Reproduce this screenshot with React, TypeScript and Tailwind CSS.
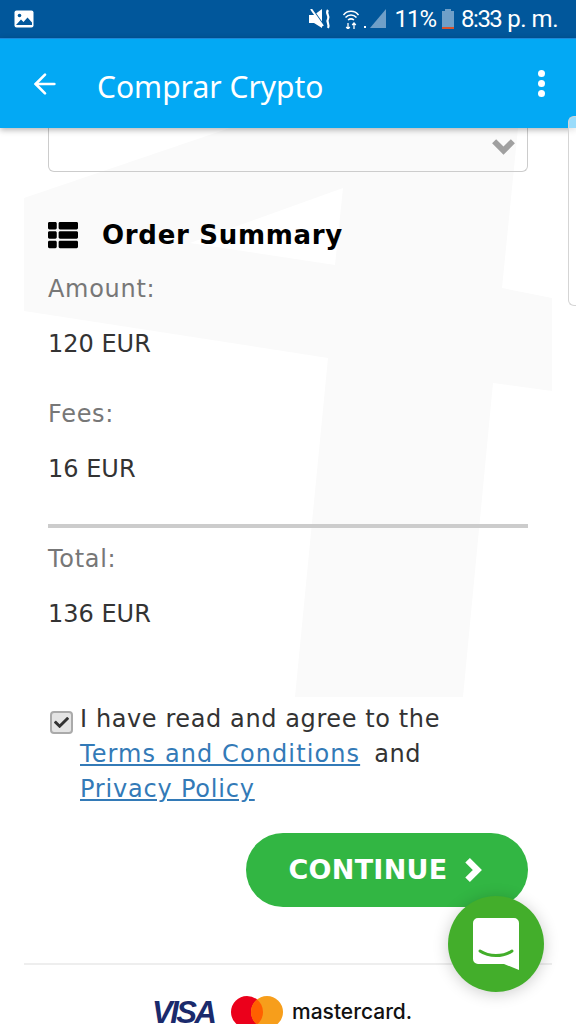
import React from "react";
import { ArrowLeft } from "lucide-react";
import { FaCheck, FaThList } from "react-icons/fa";

const body = "font-['DejaVu_Sans','Inter',sans-serif]";

function Chevron({ dir, size, width, color }: { dir: "down" | "right"; size: number; width: number; color: string }) {
  return (
    <svg width={size} height={size} viewBox="0 0 24 24" fill="none" stroke={color} strokeWidth={width}>
      <path d={dir === "down" ? "M3 6 L12 15 L21 6" : "M7 3 L16 12 L7 21"} />
    </svg>
  );
}

function StatusBar() {
  const text = "font-['Roboto',sans-serif] text-[24px] leading-none";
  return (
    <div className="h-[38px] bg-[#01579b] flex items-center justify-between pl-[14px] pr-[18px] text-white">
      <svg width="20" height="18" viewBox="0 0 20 18" className="mb-[1px]">
        <rect x="0.5" y="0.5" width="19" height="17" rx="2" fill="#fff" />
        <circle cx="5.5" cy="5.5" r="1.8" fill="#01579b" />
        <path d="M2 15 L7 9.5 L9.5 12 L13.5 7.5 L18 12.5 V15 Z" fill="#01579b" />
      </svg>
      <div className="flex items-center">
        <svg width="22" height="20" viewBox="0 0 22 20" fill="#fff" className="mr-[12px]">
          <path d="M0 6 H5 L13 0 V19 L5 14 H0 Z" />
          <path d="M3 0 L15 17" stroke="#01579b" strokeWidth="2" />
          <path d="M2 0 L14 17" stroke="#fff" strokeWidth="2" />
          <path d="M19 1 C16 5 21 6 19 10 C17 13 21 15 19 19" stroke="#fff" strokeWidth="2.2" fill="none" />
        </svg>
        <svg width="16" height="20" viewBox="0 0 16 20" fill="none" stroke="#fff" strokeWidth="1.5" className="mr-[5px]">
          <path d="M0.5 6 C4 1 12 1 15.5 6" />
          <path d="M2.5 8.5 C5.5 5 10.5 5 13.5 8.5" />
          <path d="M5 11 C7 9.5 9 9.5 11 11" />
          <path d="M5 14 V20 M3.2 18 L5 20 L6.8 18 M11 20 V14 M9.2 16 L11 14 L12.8 16" strokeWidth="1.3" />
        </svg>
        <svg width="22" height="20" viewBox="0 0 22 20" className="mr-[9px]">
          <path d="M22 0 V19 H6 Z" fill="#6f9fc8" />
          <rect x="0" y="17" width="2" height="2" fill="#fff" />
        </svg>
        <span className={`${text} tracking-[-1px] mr-[6px]`}>11%</span>
        <div className="w-[12px] h-[20px] mr-[7px] flex flex-col items-center">
          <div className="w-[6px] h-[2px] bg-[#6f9fc8]" />
          <div className="w-[12px] flex-1 bg-[#6f9fc8] flex flex-col justify-end">
            <div className="h-[2px] bg-[#d9532c]" />
          </div>
        </div>
        <span className={`${text} tracking-[-1.5px]`}>8:33</span>
        <span className={`${text} ml-[6px] tracking-[-0.5px]`}>p. m.</span>
      </div>
    </div>
  );
}

function Header() {
  return (
    <div className="relative z-10 h-[90px] bg-[#03a9f4] border-t border-[#1e88d8] flex items-center pl-[29px] pr-[31px] text-white shadow-[0_2px_6px_rgba(0,0,0,0.3)]">
      <ArrowLeft size={32} strokeWidth={2} />
      <span className="ml-[36px] mt-[6px] flex-1 font-['Noto_Sans',sans-serif] text-[30px] leading-none">Comprar Crypto</span>
      <div className="flex flex-col gap-[3px]">
        <div className="w-[7px] h-[7px] rounded-full bg-white" />
        <div className="w-[7px] h-[7px] rounded-full bg-white" />
        <div className="w-[7px] h-[7px] rounded-full bg-white" />
      </div>
    </div>
  );
}

function Watermark() {
  return (
    <svg className="absolute left-0 top-[128px]" width="576" height="580" viewBox="0 128 576 580">
      <path
        d="M24 198 L230 128 L518 128 L502 288 L552 298 L552 391 L493 383 L463 697 L295 697 L328 358 L24 311 Z"
        fill="#fafafa"
      />
      <path d="M190 243 L343 188 L335 265 Z" fill="#fff" />
    </svg>
  );
}

function Row({ label, value, mt }: { label: string; value: string; mt: string }) {
  return (
    <div className={mt}>
      <div className="text-[24px] leading-[34px] text-[#777] tracking-[0.7px]">{label}</div>
      <div className="mt-[21px] text-[24px] leading-[34px] text-[#333]">{value}</div>
    </div>
  );
}

function Logos() {
  return (
    <div className="mt-[30px] flex items-start h-[30px] pl-[128px]">
      <span className="w-[61px] shrink-0 font-['Liberation_Sans',sans-serif] font-bold italic text-[31px] leading-[36px] text-[#1a2a6c] tracking-[-2.5px]">VISA</span>
      <svg width="52" height="32" viewBox="0 0 52 32" className="ml-[18px] mt-[1px] shrink-0">
        <circle cx="16" cy="16" r="16" fill="#eb001b" />
        <circle cx="36" cy="16" r="16" fill="#f79e1b" />
        <path d="M26 3.5 a16 16 0 0 1 0 25 a16 16 0 0 1 0 -25 Z" fill="#ff5f00" />
      </svg>
      <span className="ml-[9px] mt-[4px] font-['Inter',sans-serif] font-medium text-[21px] leading-[26px] text-[#111]">mastercard.</span>
    </div>
  );
}

export default function App() {
  return (
    <div className={`relative w-[576px] h-[1024px] overflow-hidden bg-white ${body}`}>
      <StatusBar />
      <Header />
      <Watermark />
      <div className="absolute z-20 right-0 top-[116px] w-[8px] h-[190px] rounded-l-[6px] bg-white/60 border border-r-0 border-[#d5d5d5]" />

      <div className="relative px-[48px]">
        <div className="h-[44px] border border-t-0 border-[#ccc] rounded-b-[6px] flex items-center justify-end pr-[11px] pb-[4px]">
          <Chevron dir="down" size={25} width={5.5} color="#a0a0a0" />
        </div>

        <div className="mt-[46px] flex items-center">
          <FaThList size={30} color="#000" />
          <span className="ml-[24px] text-[26px] leading-[34px] font-bold text-black tracking-[0.7px]">Order Summary</span>
        </div>

        <Row label="Amount:" value="120 EUR" mt="mt-[20px]" />
        <Row label="Fees:" value="16 EUR" mt="mt-[36px]" />
        <div className="mt-[38px] h-[4px] bg-[#ccc]" />
        <Row label="Total:" value="136 EUR" mt="mt-[14px]" />

        <div className="mt-[71px] flex items-start">
          <div className="ml-[2px] mt-[9px] w-[23px] h-[23px] shrink-0 rounded-[4px] border-2 border-[#aaa] bg-[#e4e4e4] flex items-center justify-center">
            <FaCheck size={15} color="#333" />
          </div>
          <div className="ml-[7px] text-[24px] leading-[35px] text-[#333]">
            <div className="tracking-[0.6px]">I have read and agree to the</div>
            <div>
              <span className="text-[#337ab7] underline tracking-[1.1px]">Terms and Conditions</span>
              <span className="ml-[14px] tracking-[0.6px]">and</span>
            </div>
            <div className="text-[#337ab7] underline tracking-[0.8px]">Privacy Policy</div>
          </div>
        </div>

        <div className="mt-[26px] flex justify-end">
          <button className="w-[282px] h-[74px] rounded-full bg-[#32b643] flex items-center justify-center text-white text-[27px] font-bold tracking-[0.3px]">
            CONTINUE
            <span className="ml-[12px]">
              <Chevron dir="right" size={26} width={6} color="#fff" />
            </span>
          </button>
        </div>
      </div>

      <div className="mx-[24px] mt-[56px] border-t-2 border-[#eee]">
        <Logos />
      </div>

      <div className="absolute left-[448px] top-[896px] w-[96px] h-[96px] rounded-full bg-[#43ae2b] shadow-[0_2px_16px_rgba(0,0,0,0.2)] flex items-center justify-center">
        <svg width="46" height="52" viewBox="0 0 46 52">
          <path d="M5 0 H41 A5 5 0 0 1 46 5 V52 L31 46 H5 A5 5 0 0 1 0 41 V5 A5 5 0 0 1 5 0 Z" fill="#fff" />
          <path d="M7 33 C16 39 30 39 39 33" stroke="#43ae2b" strokeWidth="3" fill="none" strokeLinecap="round" />
        </svg>
      </div>
    </div>
  );
}
